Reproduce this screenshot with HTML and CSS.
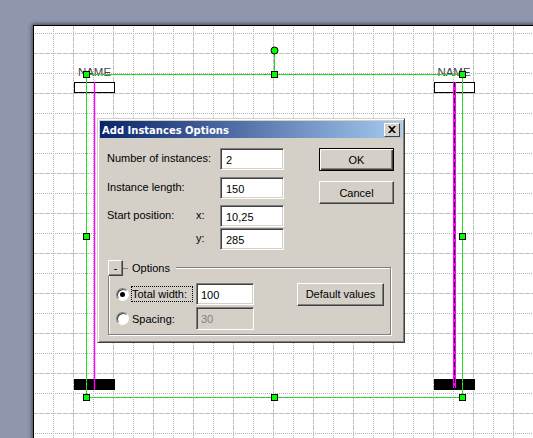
FILE: index.html
```html
<!DOCTYPE html>
<html>
<head>
<meta charset="utf-8">
<title>Add Instances Options</title>
<link rel="stylesheet" href="styles.css">
</head>
<body>
<div class="stage">
  <!-- drawing canvas -->
  <svg class="sheet" width="533" height="438" viewBox="0 0 533 438">
    <defs>
      <pattern id="grid" patternUnits="userSpaceOnUse" x="33" y="13" width="40" height="40">
        <path class="dot" d="M0 20.5H40M20.5 0V40"/>
        <path class="dash" d="M0 .5H40M.5 0V40"/>
      </pattern>
    </defs>
    <rect class="page" x="33" y="25" width="520" height="440"/>
    <rect fill="url(#grid)" x="34" y="26" width="499" height="412"/>
    <rect class="edge" x="33.5" y="25.5" width="520" height="440"/>

    <rect class="head" x="74.5" y="82.5" width="40" height="10"/>
    <rect class="head" x="434.5" y="82.5" width="40" height="10"/>
    <rect class="foot" x="74" y="379" width="41" height="11"/>
    <rect class="foot" x="434" y="379" width="41" height="11"/>
    <text class="name" x="94.5" y="76">NAME</text>
    <text class="name" x="454" y="76">NAME</text>

    <path class="life" d="M94.5 82V390"/>
    <path class="life thick" d="M454.500 82V388"/>
    <path class="life-dash" d="M454.500 82V388"/>

    <path class="sel-base" d="M86.500 74.500H462.500V397.500H86.500ZM274.500 50V74"/>
    <path class="sel" d="M86.500 74.500H462.500V397.500H86.500ZM274.500 50V74"/>
    <g class="grip">
      <rect x="83.500" y="71.500" width="6" height="6"/>
      <rect x="271.500" y="71.500" width="6" height="6"/>
      <rect x="459.500" y="71.500" width="6" height="6"/>
      <rect x="83.500" y="233.500" width="6" height="6"/>
      <rect x="459.500" y="233.500" width="6" height="6"/>
      <rect x="83.500" y="394.500" width="6" height="6"/>
      <rect x="271.500" y="394.500" width="6" height="6"/>
      <rect x="459.500" y="394.500" width="6" height="6"/>
      <circle cx="274.500" cy="50.500" r="3.500"/>
    </g>
  </svg>

  <div class="dialog">
    <div class="titlebar">
      <span class="title">Add Instances Options</span>
      <span class="close">
        <svg width="8" height="7" viewBox="0 0 8 7"><path d="M0 0h2l2 2 2-2h2L5 3.500 8 7H6L4 5 2 7H0l3-3.500z"/></svg>
      </span>
    </div>
    <div class="body">
      <div class="top">
        <div class="fields">
          <label class="wide row1">Number of instances:</label>
          <input class="field row1" value="2">
          <label class="wide row2">Instance length:</label>
          <input class="field row2" value="150">
          <label class="row3">Start position:</label>
          <label class="row3">x:</label>
          <input class="field row3" value="10,25">
          <label class="row4"></label>
          <label class="row4">y:</label>
          <input class="field row4" value="285">
        </div>
        <div class="actions">
          <button class="btn default">OK</button>
          <button class="btn">Cancel</button>
        </div>
      </div>
      <div class="group">
        <div class="legend">
          <button class="btn mini">-</button>
          <span class="tick"></span>
          <span>Options</span>
        </div>
        <div class="opts">
          <span class="radio on"></span>
          <label class="focus">Total width:</label>
          <input class="field" value="100">
          <button class="btn defaults">Default values</button>
          <span class="radio"></span>
          <label class="plain">Spacing:</label>
          <input class="field off" value="30" disabled>
        </div>
      </div>
    </div>
  </div>
</div>
</body>
</html>
```

FILE: styles.css
```css
html,body{margin:0;padding:0;}
body{background:#8e97ae;font-family:"Liberation Sans",Arial,sans-serif;font-size:11px;color:#000;overflow:hidden;}
.stage{position:relative;width:533px;height:438px;overflow:hidden;}

/* canvas */
.sheet{display:block;}
.page{fill:#fff;filter:drop-shadow(-1px -1px 2px rgba(0,0,0,.55));}
.edge{fill:none;stroke:#000;stroke-width:1;}
.dot{fill:none;stroke:#b4b4b4;stroke-width:1;stroke-dasharray:1 1;}
.dash{fill:none;stroke:#c0c0c0;stroke-width:1;stroke-dasharray:5 1;}
.head{fill:#fff;stroke:#000;stroke-width:1;}
.foot{fill:#000;}
.name{font-family:"Liberation Sans",Arial,sans-serif;font-size:11.5px;fill:#444;text-anchor:middle;}
.life{fill:none;stroke:#f0f;stroke-width:1.4;}
.life.thick{stroke-width:3;}
.life-dash{fill:none;stroke:#000;stroke-width:1;stroke-dasharray:5 3;}
.sel-base{fill:none;stroke:#808080;stroke-width:1;}
.sel{fill:none;stroke:#0f0;stroke-width:1;stroke-dasharray:4 2;}
.grip rect,.grip circle{fill:#0f0;stroke:#000;stroke-width:1;}

/* dialog */
.dialog{position:absolute;left:97px;top:118px;width:308px;height:225px;box-sizing:border-box;padding:2px;background:#d4d0c8;border:1px solid;border-color:#d4d0c8 #404040 #404040 #d4d0c8;box-shadow:inset 1px 1px 0 #fff,inset -1px -1px 0 #808080;}
.titlebar{display:flex;align-items:center;justify-content:space-between;height:17px;padding:0 2px;background:linear-gradient(to right,#0a246a,#a6caf0);}
.title{padding-top:2px;color:#fff;font-family:"DejaVu Sans",sans-serif;font-weight:bold;font-size:10px;}
.close{display:flex;align-items:center;justify-content:center;width:16px;height:14px;box-sizing:border-box;background:#d4d0c8;border:1px solid;border-color:#fff #404040 #404040 #fff;}
.body{padding:10px 8px 0 7px;}
.top{display:flex;}
.fields{display:grid;grid-template-columns:89px 24px 64px;grid-template-rows:22px 7px 22px 6px 22px 1px 22px;width:177px;align-items:center;}
.fields label{padding-bottom:2px;white-space:nowrap;}
.fields .field{padding-left:5px;}
.wide{grid-column:span 2;}
.row1{grid-row:1;}
.row2{grid-row:3;}
.row3{grid-row:5;}
.row4{grid-row:7;}
.field{box-sizing:border-box;width:100%;height:22px;margin:0;padding:1px 3px 0 4px;font:11px "Liberation Sans",Arial,sans-serif;color:#000;background:#fff;outline:0;border:1px solid;border-color:#808080 #fff #fff #808080;box-shadow:inset 1px 1px 0 #404040,inset -1px -1px 0 #d4d0c8;}
.field.off{height:23px;background:#d4d0c8;color:#808080;}
.actions{display:flex;flex-direction:column;gap:10px;margin-left:35px;}
.btn{display:block;box-sizing:border-box;width:75px;height:23px;margin:0;padding:0;font:11px "Liberation Sans",Arial,sans-serif;color:#000;background:#d4d0c8;border:1px solid;border-color:#fff #404040 #404040 #fff;box-shadow:inset -1px -1px 0 #808080;}
.btn.default{border:1px solid #000;box-shadow:inset 1px 1px 0 #fff,inset -1px -1px 0 #404040,inset -2px -2px 0 #808080;}

/* options group */
.group{position:relative;box-sizing:border-box;margin:17px 3px 0 1px;height:68px;padding:15px 0 0 7px;border:1px solid #808080;box-shadow:inset 1px 1px 0 #fff,1px 1px 0 #fff;}
.legend{position:absolute;left:-1px;top:-8px;display:flex;align-items:center;height:16px;padding-right:6px;background:#d4d0c8;}
.btn.mini{width:15px;height:16px;line-height:12px;}
.tick{width:5px;height:1px;margin-right:4px;background:#808080;}
.opts{display:grid;grid-template-columns:16px 64px 58px 87px;grid-template-rows:22px 23px;row-gap:2px;align-items:center;}
.radio{position:relative;box-sizing:border-box;width:13px;height:13px;border-radius:50%;background:#fff;border:1px solid;border-color:#808080 #fff #fff #808080;box-shadow:inset 1px 1px 0 #404040;}
.radio.on::after{content:"";position:absolute;left:3px;top:3px;width:5px;height:5px;border-radius:50%;background:#000;}
.focus{margin-right:4px;padding:1px 0;outline:1px dotted #000;white-space:nowrap;}
.plain{white-space:nowrap;}
.btn.defaults{grid-row:1;grid-column:4;width:87px;margin-left:43px;}
```
